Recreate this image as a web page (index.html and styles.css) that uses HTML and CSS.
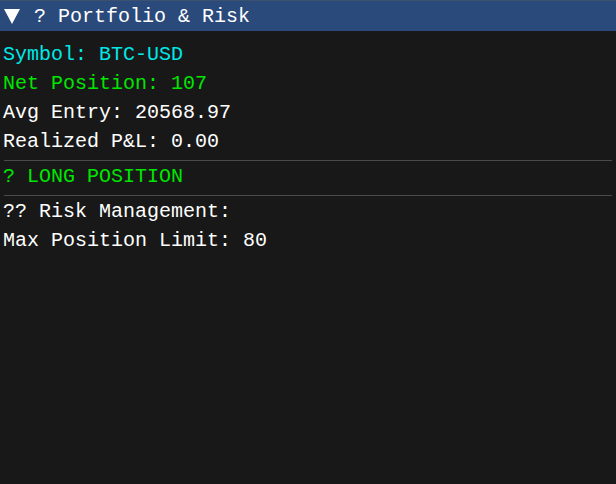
FILE: index.html
```html
<!DOCTYPE html>
<html>
<head>
<meta charset="utf-8">
<link rel="stylesheet" href="styles.css">
</head>
<body>
<div class="window">
  <div class="titlebar">
    <svg class="arrow" width="18" height="16" viewBox="0 0 18 16"><polygon points="2,9 18,9 10,24" transform="translate(0,-9)" fill="#ffffff"/></svg>
    <span class="title">? Portfolio &amp; Risk</span>
  </div>
  <div class="content">
    <div class="row cyan">Symbol: BTC-USD</div>
    <div class="row green">Net Position: 107</div>
    <div class="row">Avg Entry: 20568.97</div>
    <div class="row">Realized P&amp;L: 0.00</div>
    <div class="sep"></div>
    <div class="row green">? LONG POSITION</div>
    <div class="sep"></div>
    <div class="row">?? Risk Management:</div>
    <div class="row">Max Position Limit: 80</div>
  </div>
</div>
</body>
</html>
```
FILE: styles.css
```css
html, body {
  margin: 0;
  padding: 0;
  background: #181818;
}
.window {
  width: 616px;
  height: 484px;
  background: #181818;
  font-family: "Liberation Mono", "DejaVu Sans Mono", monospace;
  font-size: 20px;
  color: #ffffff;
  overflow: hidden;
}
.titlebar {
  height: 31px;
  box-sizing: border-box;
  background: #294a7a;
  border-top: 1px solid #3c5070;
  display: flex;
  align-items: center;
  padding-left: 2px;
}
.arrow {
  display: block;
  margin-top: 1px;
}
.title {
  margin-left: 14px;
  line-height: 29px;
  white-space: pre;
}
.content {
  padding: 9px 4px 0 3px;
}
.row {
  height: 29px;
  line-height: 29px;
  white-space: pre;
}
.cyan { color: #00e8e8; }
.green { color: #00e600; }
.sep {
  height: 1px;
  background: #4a4a4a;
  margin: 4px 0 1px 1px;
}
```
